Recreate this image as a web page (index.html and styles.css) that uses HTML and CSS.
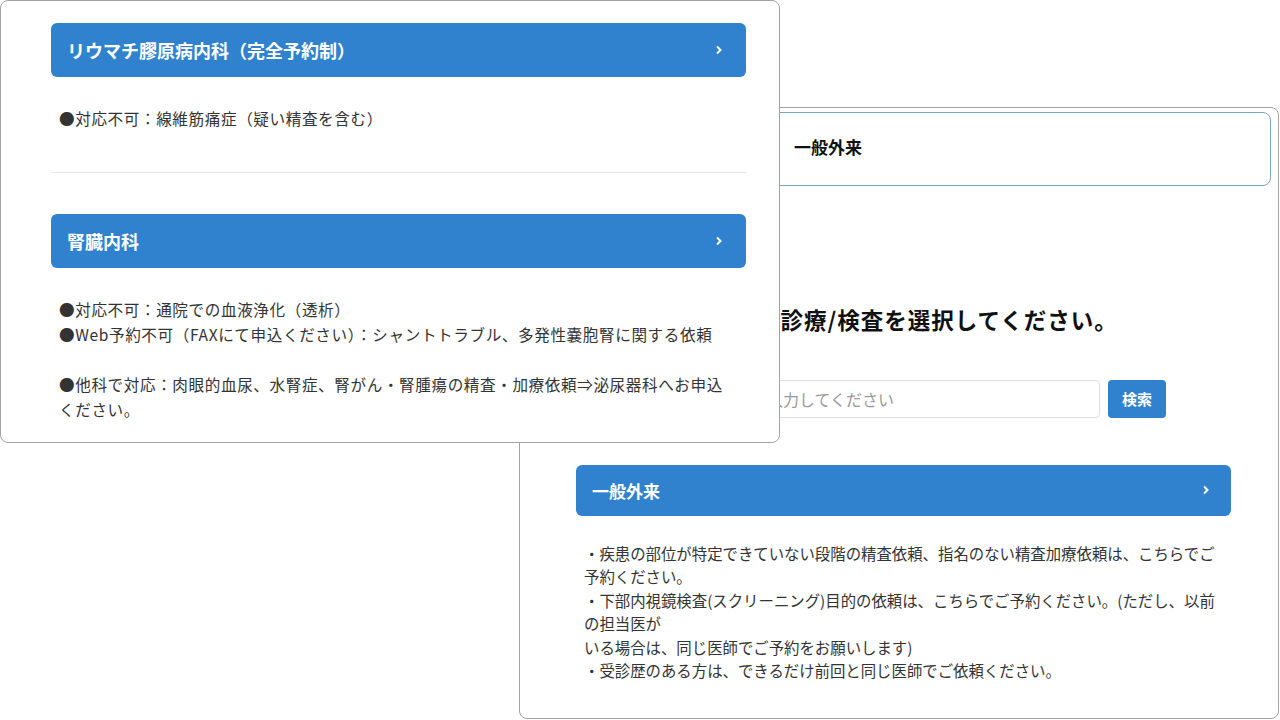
FILE: index.html
```html
<!doctype html>
<html lang="ja">
  <head>
    <meta charset="utf-8">
    <title>診療科選択</title>
    <link rel="stylesheet" href="styles.css">
  </head>

  <body>

    <!-- 後ろの画面：一般外来 -->
    <div class="shot shot-back">
      <div class="tab-box">
        <span class="tab-label">一般外来</span>
      </div>

      <div class="back-body">
        <h2 class="page-title">予約をご希望される診療/検査を選択してください。</h2>

        <form class="search">
          <input class="search-input" type="text" placeholder="診療科名または検査名を入力してください">
          <button class="search-btn" type="submit">検索</button>
        </form>

        <section class="dept dept-sm">
          <a class="dept-bar" href="#">
            <span>一般外来</span>
            <svg class="chev" width="8" height="10" viewBox="0 0 8 10"><polyline points="2,1.5 5.5,5 2,8.5" fill="none" stroke="#fff" stroke-width="2"/></svg>
          </a>
          <p class="dept-note">
            ・疾患の部位が特定できていない段階の精査依頼、指名のない精査加療依頼は、こちらでご<br>
            予約ください。<br>
            ・下部内視鏡検査(スクリーニング)目的の依頼は、こちらでご予約ください。(ただし、以前<br>
            の担当医が<br>
            いる場合は、同じ医師でご予約をお願いします)<br>
            ・受診歴のある方は、できるだけ前回と同じ医師でご依頼ください。
          </p>
        </section>
      </div>
    </div>

    <!-- 前の画面：リウマチ膠原病内科・腎臓内科 -->
    <div class="shot shot-front">
      <section class="dept">
        <a class="dept-bar" href="#">
          <span>リウマチ膠原病内科（完全予約制）</span>
          <svg class="chev" width="8" height="10" viewBox="0 0 8 10"><polyline points="2,1.5 5.5,5 2,8.5" fill="none" stroke="#fff" stroke-width="2"/></svg>
        </a>
        <p class="dept-note">●対応不可：線維筋痛症（疑い精査を含む）</p>
      </section>

      <hr class="divider">

      <section class="dept">
        <a class="dept-bar" href="#">
          <span>腎臓内科</span>
          <svg class="chev" width="8" height="10" viewBox="0 0 8 10"><polyline points="2,1.5 5.5,5 2,8.5" fill="none" stroke="#fff" stroke-width="2"/></svg>
        </a>
        <p class="dept-note">
          ●対応不可：通院での血液浄化（透析）<br>
          ●Web予約不可（FAXにて申込ください）：シャントトラブル、多発性嚢胞腎に関する依頼<br>
          <br>
          ●他科で対応：肉眼的血尿、水腎症、腎がん・腎腫瘍の精査・加療依頼⇒泌尿器科へお申込<br>
          ください。
        </p>
      </section>
    </div>

  </body>
</html>
```

FILE: styles.css
```css
body {
  margin: 0;
  width: 1280px;
  height: 720px;
  position: relative;
  overflow: hidden;
  background-color: #fff;
  font-family: "Noto Sans CJK JP", "Noto Sans", sans-serif;
  color: #333;
}
/* 画面の切り抜き（重ねて配置） */
.shot {
  position: absolute;
  box-sizing: border-box;
  background-color: #fff;
  border: 1.5px solid #a3a3a3;
  border-radius: 8px;
}
.shot-front {
  left: 0;
  top: 0;
  width: 780px;
  height: 443px;
  padding: 22px 33px 0 50px;
}
.shot-back {
  left: 519px;
  top: 107px;
  width: 760px;
  height: 612px;
  padding: 3.5px 7px 0 7px;
}
/* 診療科バー */
.dept-bar {
  display: flex;
  align-items: center;
  justify-content: space-between;
  height: 54px;
  padding: 0 23px 0 16px;
  border-radius: 6px;
  background-color: #3182ce;
  color: #fff;
  font-size: 18px;
  font-weight: bold;
  text-decoration: none;
}
.dept-note {
  margin: 29px 0 0;
  padding-left: 8px;
  font-size: 15.6px;
  line-height: 25px;
  letter-spacing: 0.6px;
  white-space: nowrap;
}
.divider {
  margin: 41px 0 41px;
  border: 0;
  border-top: 1px solid #e6e6e6;
}
/* 後ろの画面 */
.tab-box {
  display: flex;
  align-items: center;
  height: 74px;
  box-sizing: border-box;
  padding: 0 0 4px 266px;
  border: 1.5px solid #7da5c6;
  border-radius: 8px;
}
.tab-label {
  font-size: 17px;
  font-weight: bold;
  color: #111;
}
.back-body {
  padding: 0 40px 0 49px;
}
.page-title {
  margin: 117px 0 0 -7px;
  font-size: 22.5px;
  line-height: 32px;
  letter-spacing: 1px;
  font-weight: bold;
  color: #111;
  white-space: nowrap;
}
.search {
  display: flex;
  gap: 8px;
  margin-top: 45px;
}
.search-input {
  width: 524px;
  height: 38px;
  box-sizing: border-box;
  padding: 0 12px 0 14px;
  border: 1px solid #dedede;
  border-radius: 4px;
  font-family: inherit;
  font-size: 16px;
}
.search-input::placeholder {
  color: #9a9a9a;
}
.search-btn {
  width: 58px;
  height: 38px;
  border: 0;
  border-radius: 4px;
  background-color: #3182ce;
  color: #fff;
  font-family: inherit;
  font-size: 15px;
  font-weight: bold;
}
.dept-sm {
  margin-top: 47px;
}
.dept-sm .dept-bar {
  height: 51px;
  padding-right: 21px;
  font-size: 17px;
}
.dept-sm .dept-note {
  margin-top: 26px;
  font-size: 15.4px;
  line-height: 23.6px;
  letter-spacing: 0;
}
```
